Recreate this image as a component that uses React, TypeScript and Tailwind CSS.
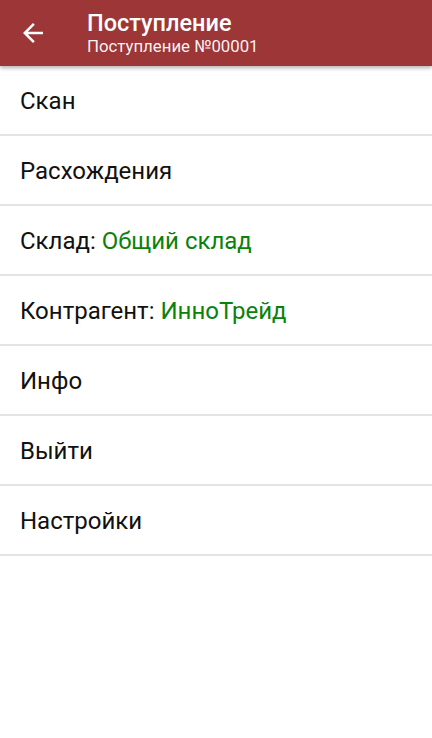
import React from 'react';

const items: { label: string; value?: string }[] = [
  { label: 'Скан' },
  { label: 'Расхождения' },
  { label: 'Склад:', value: 'Общий склад' },
  { label: 'Контрагент:', value: 'ИнноТрейд' },
  { label: 'Инфо' },
  { label: 'Выйти' },
  { label: 'Настройки' },
];

const App: React.FC = () => {
  return (
    <div className="w-[432px] h-[738px] bg-white font-['Roboto',sans-serif] overflow-hidden">
      <header className="relative z-10 h-[66px] bg-[#9d3637] flex items-center shadow-[0_2px_4px_rgba(0,0,0,0.3)]">
        <button className="w-[30px] h-[30px] ml-[18px] mr-[39px] text-white" aria-label="back">
          <svg viewBox="0 0 24 24" width="30" height="30" fill="currentColor">
            <path d="M20 11H7.83l5.59-5.59L12 4l-8 8 8 8 1.41-1.41L7.83 13H20v-2z" />
          </svg>
        </button>
        <div className="flex flex-col text-white">
          <h1 className="text-[23.5px] leading-[27px] font-medium">Поступление</h1>
          <p className="text-[16.8px] leading-[19px] text-white/95">Поступление №00001</p>
        </div>
      </header>

      <ul>
        {items.map((it) => (
          <li
            key={it.label}
            className="h-[70px] flex items-center px-5 pt-[2px] border-b-2 border-[#e4e4e4] text-[24px] text-[#111]"
          >
            <span>
              {it.label}
              {it.value && <span className="text-[#0a820a]"> {it.value}</span>}
            </span>
          </li>
        ))}
      </ul>
    </div>
  );
};

export default App;
